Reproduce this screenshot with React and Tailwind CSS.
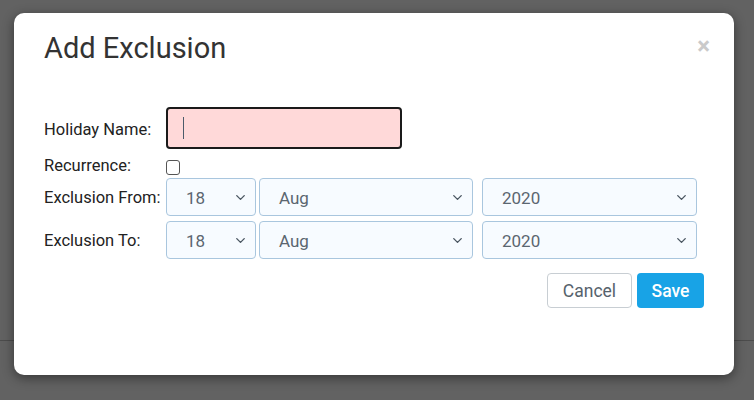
import { ChevronDown } from 'lucide-react'

function Select({ value, width }) {
  return (
    <div
      className={`relative h-[38px] ${width} rounded-[4px] border border-[#a9c6de] bg-[#f7fbff] flex items-center`}
    >
      <span className="pl-[19px] pt-[3px] text-[17px] text-[#5b6670]">{value}</span>
      <ChevronDown className="absolute right-[7px] top-[11px] w-[15px] h-[15px] text-[#4a5661]" strokeWidth={2.2} />
    </div>
  )
}

function DateRow({ label, mt }) {
  return (
    <div className={`flex items-center ${mt}`}>
      <label className="w-[122px] pt-[3px] text-[16.5px] text-[#222]">{label}</label>
      <div className="flex">
        <Select value="18" width="w-[90px]" />
        <div className="ml-[3px]">
          <Select value="Aug" width="w-[214px]" />
        </div>
        <div className="ml-[9px]">
          <Select value="2020" width="w-[215px]" />
        </div>
      </div>
    </div>
  )
}

export default function App() {
  return (
    <div
      className="relative w-[754px] h-[400px] overflow-hidden bg-[#626262]"
      style={{ fontFamily: 'Roboto, "Liberation Sans", sans-serif' }}
    >
      <div className="h-[340px]" />
      <div className="h-px bg-[#4c4c4c]" />

      <div className="absolute left-[14px] top-[13px] w-[720px] h-[362px] rounded-[10px] bg-white shadow-[0_3px_12px_rgba(0,0,0,0.45)]">
        <button
          type="button"
          className="absolute right-[24px] top-[21px] text-[24px] font-bold leading-none text-[#cacaca]"
        >
          ×
        </button>

        <div className="px-[30px]">
          <h2 className="pt-[18px] text-[29px] leading-[34px] text-[#333]">Add Exclusion</h2>

          <div className="mt-[42px] flex items-center h-[42px]">
            <label className="w-[122px] pt-[4px] text-[16.5px] text-[#222]">Holiday Name:</label>
            <div className="w-[236px] h-[42px] rounded-[4px] border-2 border-[#1a1a1a] bg-[#ffd9d9] flex items-center">
              <span className="ml-[15px] w-px h-[22px] bg-[#4c5b6a]" />
            </div>
          </div>

          <div className="flex h-[29px]">
            <label className="w-[122px] mt-[7px] text-[16.5px] text-[#222] leading-[20px]">
              Recurrence:
            </label>
            <div className="mt-[11px] w-[14px] h-[15px] rounded-[3px] border border-[#555] bg-white" />
          </div>

          <DateRow label="Exclusion From:" mt="" />
          <DateRow label="Exclusion To:" mt="mt-[5px]" />

          <div className="mt-[14px] flex justify-end gap-[5px]">
            <button
              type="button"
              className="w-[85px] h-[35px] pt-[2px] rounded-[4px] border border-[#c8ced3] bg-white text-[17.5px] text-[#56626c]"
            >
              Cancel
            </button>
            <button
              type="button"
              className="w-[67px] h-[35px] pt-[2px] rounded-[4px] bg-[#18a3e6] text-[17.5px] font-medium text-white"
            >
              Save
            </button>
          </div>
        </div>
      </div>
    </div>
  )
}
